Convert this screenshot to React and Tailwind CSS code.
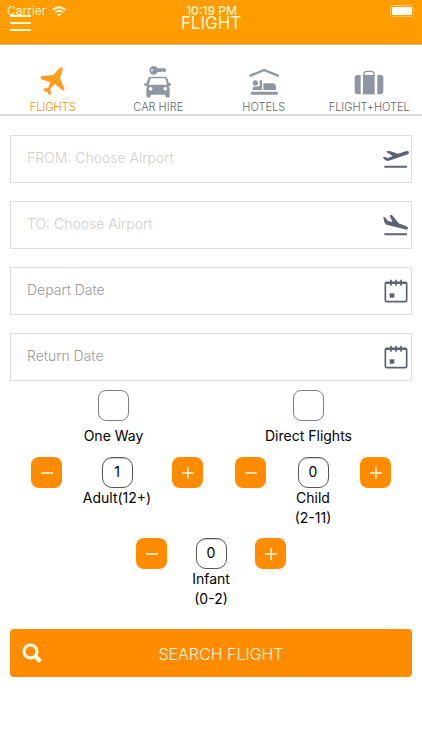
import { useState } from 'react';

function PlaneIcon() {
  return (
    <svg width="27" height="31" viewBox="120 30 78 93" fill="#ff9d1e" aria-hidden="true">
      <path d="M188 33Q191 40 187 50L181 66L195 98Q196 106 188 103L167 84L152 97L155 112Q153 120 149 118L143 108L133 104Q129 100 134 97L146 96L152 79L126 70Q120 65 127 60L162 57L175 41Q182 33 188 33Z" />
    </svg>
  );
}

function CarIcon() {
  return (
    <svg width="28" height="33" viewBox="434 27 84 99" fill="#8f96a3" aria-hidden="true">
      <path fillRule="evenodd" d="M463 30C469 30 473 33 475 37H498L501 43L497 48H492L489 45L486 48H475C473 53 469 56 463 56A13 13 0 0 1 463 30ZM458 40A3 3 0 1 0 458 46A3 3 0 1 0 458 40Z" />
      <path fillRule="evenodd" d="M453 62H498Q502 62 504 67L509 82H515Q517 86 513 89L508 90Q511 94 511 101V122Q509 126 500 124Q498 123 498 116H454V122Q450 126 443 124Q441 122 441 117V101Q441 94 444 90L437 89Q433 86 436 82H442L447 67Q449 62 453 62ZM454 67L448 86H503L498 67ZM454 93A5 5 0 1 0 454 104A5 5 0 1 0 454 93ZM498 93A5 5 0 1 0 498 104A5 5 0 1 0 498 93Z" />
    </svg>
  );
}

function BedIcon() {
  return (
    <svg width="30" height="28" viewBox="112 36 90 84" aria-hidden="true">
      <path d="M116 59L157 42L199 59" fill="none" stroke="#8f96a3" strokeWidth="7" strokeLinecap="round" strokeLinejoin="round" />
      <g fill="#8f96a3">
        <circle cx="131" cy="81" r="8" />
        <path d="M144 74Q147 70 151 74V102H123V95Q126 91 131 92L144 90ZM155 82H184Q193 84 193 94V102H155Z" />
        <rect x="117" y="107" width="82" height="9" rx="4" />
      </g>
    </svg>
  );
}

function SuitcaseIcon() {
  return (
    <svg width="30" height="26" viewBox="430 36 90 78" fill="#8f96a3" aria-hidden="true">
      <path d="M450 54V112H440Q432 111 432 103V63Q432 55 440 54ZM500 54H510Q518 55 518 63V103Q518 111 510 112H500Z" />
      <path d="M457 54H492V112H457Z" />
      <path d="M460 57V51Q460 43 469 43H481Q490 43 490 51V57" fill="none" stroke="#8f96a3" strokeWidth="4" />
    </svg>
  );
}

function TakeoffIcon() {
  return (
    <svg width="28" height="18" viewBox="128 60 84 54" fill="#5d6377" aria-hidden="true">
      <path d="M142 64L151 63L176 71L201 63Q210 62 209 69Q208 72 202 74L146 93L138 91L130 82L137 81L146 84L160 78L141 66Z" />
      <rect x="135" y="107" width="68" height="6" rx="1" />
    </svg>
  );
}

function LandingIcon() {
  return (
    <svg width="28" height="22" viewBox="128 253 84 66" fill="#5d6377" aria-hidden="true">
      <path d="M132 262L137 263L146 274L159 277L151 257L158 256L178 281L201 290Q208 293 206 298Q203 301 197 299L141 285L135 278Z" />
      <rect x="135" y="311" width="68" height="6" rx="1" />
    </svg>
  );
}

function CalendarIcon() {
  return (
    <svg width="24" height="24" viewBox="133 58 72 72" aria-hidden="true">
      <rect x="137" y="68" width="64" height="58" rx="5" fill="none" stroke="#5d6377" strokeWidth="5" />
      <path d="M137 70H201" stroke="#5d6377" strokeWidth="6" />
      <path d="M154 60V78M169 60V78M184 60V78" stroke="#5d6377" strokeWidth="5" />
      <rect x="150" y="101" width="14" height="13" fill="#5d6377" />
    </svg>
  );
}

const tabs = [
  { id: 'flights', label: 'FLIGHTS', icon: PlaneIcon },
  { id: 'car', label: 'CAR HIRE', icon: CarIcon },
  { id: 'hotels', label: 'HOTELS', icon: BedIcon },
  { id: 'bundle', label: 'FLIGHT+HOTEL', icon: SuitcaseIcon },
];

const fields = [
  { id: 'from', label: 'FROM: Choose Airport', icon: TakeoffIcon, tone: 'placeholder:text-[#cfcfcf]' },
  { id: 'to', label: 'TO: Choose Airport', icon: LandingIcon, tone: 'placeholder:text-[#cfcfcf]' },
  { id: 'depart', label: 'Depart Date', icon: CalendarIcon, tone: 'placeholder:text-[#999]' },
  { id: 'return', label: 'Return Date', icon: CalendarIcon, tone: 'placeholder:text-[#999]' },
];

function StatusBar() {
  return (
    <div className="absolute inset-x-0 top-0 flex h-[22px] items-center justify-between pl-[7px] pr-[6px] text-xs text-[#fff6d8]">
      <div className="flex flex-1 items-center gap-[6px]">
        <span>Carrier</span>
        <svg width="14" height="11" viewBox="0 0 14 11" fill="none" stroke="currentColor" strokeWidth="2" aria-hidden="true">
          <path d="M.7 4Q7-1.6 13.3 4M3 6.4Q7 3 11 6.4" />
          <path d="M7 10.5L4.8 8.2Q7 6.6 9.2 8.2Z" fill="currentColor" stroke="none" />
        </svg>
      </div>
      <span className="font-medium">10:19 PM</span>
      <div className="flex flex-1 justify-end">
        <svg width="26" height="12" viewBox="0 0 26 12" aria-hidden="true">
          <rect x=".5" y=".5" width="23" height="11" rx="2.5" fill="none" stroke="#ffc65c" />
          <rect x="2" y="2" width="20" height="8" rx="1" fill="#fff" />
          <path d="M24.5 4Q26 6 24.5 8Z" fill="#ffc65c" />
        </svg>
      </div>
    </div>
  );
}

function Toggle({ id, label }) {
  return (
    <div className="flex flex-col items-center gap-[5px]">
      <input
        id={id}
        type="checkbox"
        className="size-[31px] appearance-none rounded-lg border border-[#7d7d88] bg-white checked:bg-[#ff8c00]"
      />
      <label htmlFor={id} className="text-sm leading-5">{label}</label>
    </div>
  );
}

function StepButton({ label, plus, onClick }) {
  return (
    <button
      type="button"
      aria-label={label}
      onClick={onClick}
      className="flex size-[31px] shrink-0 items-center justify-center rounded-lg bg-[#ff8c00]"
    >
      <svg width="12" height="12" viewBox="0 0 12 12" stroke="#fff6e0" strokeWidth="1.5" aria-hidden="true">
        <path d={plus ? 'M0 6H12M6 0V12' : 'M0 6H12'} />
      </svg>
    </button>
  );
}

function Stepper({ id, name, ages, initial, width }) {
  const [count, setCount] = useState(initial);

  return (
    <div className="flex items-start">
      <StepButton label={`Fewer ${name}`} onClick={() => setCount(Math.max(0, count - 1))} />
      <div className={`flex flex-col items-center ${width}`}>
        <input
          id={id}
          value={count}
          onChange={(e) => setCount(Number(e.target.value) || 0)}
          className="size-[31px] rounded-[10px] border border-[#555] bg-white pb-[3px] text-center text-sm shadow-[inset_0_2px_1px_-1px_#ccc]"
        />
        <label htmlFor={id} className="text-center text-sm leading-5">
          {name}
          {ages && <span className="block">{ages}</span>}
        </label>
      </div>
      <StepButton plus label={`More ${name}`} onClick={() => setCount(count + 1)} />
    </div>
  );
}

function App() {
  const [activeTab, setActiveTab] = useState('flights');

  return (
    <div className="min-h-screen bg-white font-['Inter',sans-serif] text-black">
      {/* Header */}
      <header className="relative flex h-[45px] items-center border-b border-[#c9b184] bg-[#ff9d00] px-[10px] pt-[2px] text-[#fff6d8]">
        <button type="button" aria-label="Menu" className="flex w-[21px] flex-col gap-[5px]">
          <span className="h-[2px] w-full bg-current" />
          <span className="h-[2px] w-full bg-current" />
          <span className="h-[2px] w-full bg-current" />
        </button>
        <h1 className="flex-1 pr-[21px] text-center text-[17px] leading-6">FLIGHT</h1>
        <StatusBar />
      </header>

      {/* Service tabs */}
      <nav className="grid grid-cols-4 border-b-2 border-[#dcdcdc] pt-[18px]">
        {tabs.map(({ id, label, icon: Icon }) => (
          <button
            key={id}
            type="button"
            onClick={() => setActiveTab(id)}
            className={`flex flex-col items-center text-[11px] font-light leading-[14px] ${activeTab === id ? 'text-[#ff8c00]' : 'text-[#666]'}`}
          >
            <span className="flex h-[37px] items-center"><Icon /></span>
            {label}
          </button>
        ))}
      </nav>

      <form className="pt-[19px]" onSubmit={(e) => e.preventDefault()}>
        <div className="flex flex-col gap-[18px] px-[10px]">
          {fields.map(({ id, label, icon: Icon, tone }) => (
            <div key={id} className="flex h-12 items-center border border-[#dedede] pr-px">
              <input
                id={id}
                aria-label={label}
                placeholder={label}
                className={`h-full min-w-0 flex-1 pb-1 pl-4 text-sm font-light outline-none ${tone}`}
              />
              <span className="flex w-7 justify-center"><Icon /></span>
            </div>
          ))}
        </div>

        <div className="grid grid-cols-2 px-4 pt-[9px]">
          <Toggle id="one-way" label="One Way" />
          <Toggle id="direct" label="Direct Flights" />
        </div>

        {/* Passengers */}
        <div className="flex justify-between px-[31px] pt-[11px]">
          <Stepper id="adult" name="Adult(12+)" initial={1} width="w-[110px]" />
          <Stepper id="child" name="Child" ages="(2-11)" initial={0} width="w-[94px]" />
        </div>
        <div className="flex justify-center pt-[10px]">
          <Stepper id="infant" name="Infant" ages="(0-2)" initial={0} width="w-[88px]" />
        </div>

        <div className="px-[10px] pt-5">
          <button type="submit" className="flex h-12 w-full items-center rounded bg-[#ff8c00] px-3 text-[#fff6e0]">
            <svg width="20" height="20" viewBox="0 0 20 20" fill="none" stroke="#fffdf0" aria-hidden="true">
              <circle cx="8.500" cy="8.500" r="6.500" strokeWidth="3" />
              <path d="M13 13L18.500 18.500" strokeWidth="4" />
            </svg>
            <span className="flex-1 pt-[2px] text-center text-base font-light">SEARCH FLIGHT</span>
          </button>
        </div>
      </form>
    </div>
  );
}

export default App;
